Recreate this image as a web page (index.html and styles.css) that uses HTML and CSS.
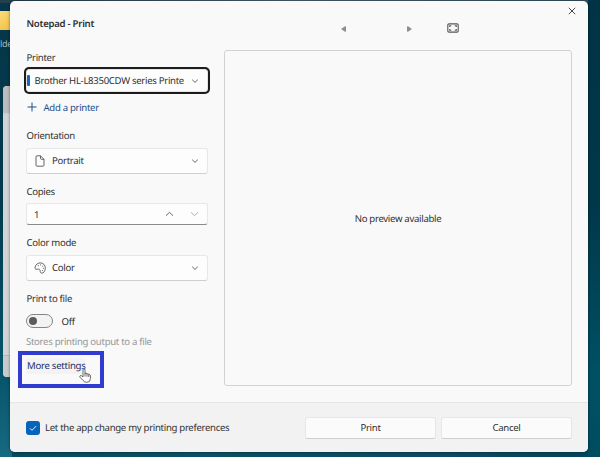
FILE: index.html
```html
<!DOCTYPE html>
<html lang="en">
<head>
<meta charset="utf-8">
<title>Notepad - Print</title>
<link rel="stylesheet" href="styles.css">
</head>
<body>
<div class="desktop">
  <div class="folder"></div>
  <span class="folder-name">lde</span>
  <div class="back-window"><div class="back-toolbar"></div><div class="back-page"></div><div class="back-status"></div></div>
</div>
<main class="dialog">
  <div class="content">
    <section class="sidebar">
      <h1>Notepad - Print</h1>
      <label class="label l-printer">Printer</label>
      <div class="select focused"><i class="accent"></i><span>Brother HL-L8350CDW series Printe</span>
        <svg class="chev" viewBox="0 0 8 8"><path d="M1.200 2.700 4 5.400 6.800 2.700"/></svg></div>
      <div class="add"><svg viewBox="0 0 10 10"><path d="M5 .5v9M.5 5h9"/></svg><span>Add a printer</span></div>
      <label class="label l-orient">Orientation</label>
      <div class="select"><svg class="icon" viewBox="0 0 12 12"><path d="M3 .8h3.500L10 4.300v5.900a1 1 0 0 1-1 1H3a1 1 0 0 1-1-1V1.800a1 1 0 0 1 1-1ZM6.500.8v2.500a1 1 0 0 0 1 1H10"/></svg><span>Portrait</span>
        <svg class="chev" viewBox="0 0 8 8"><path d="M1.200 2.700 4 5.400 6.800 2.700"/></svg></div>
      <label class="label l-copies">Copies</label>
      <div class="number"><span>1</span>
        <svg class="spin" viewBox="0 0 9 8"><path d="M1 5.700 4.500 2.300 8 5.700"/></svg>
        <svg class="spin off" viewBox="0 0 9 8"><path d="M1 2.300 4.500 5.700 8 2.300"/></svg></div>
      <label class="label l-color">Color mode</label>
      <div class="select"><svg class="icon" viewBox="0 0 12 12"><path d="M1 5.500C1.500 2.400 4 .7 6.800.9c3 .3 4.700 2.700 4.500 5.400-.2 2.700-1.700 5-3.500 4.900-1.600-.1-1.500-1.500-1.700-2.600C5.900 7.300 5 6.800 3.900 7.100 2.600 7.500.700 7.400 1 5.500Z"/><path class="dots" d="M4.200 3.700h.1M6.600 2.900h.1M8.700 4.100h.1M9.300 6.300h.1M8.300 8.500h.1"/></svg><span>Color</span>
        <svg class="chev" viewBox="0 0 8 8"><path d="M1.200 2.700 4 5.400 6.800 2.700"/></svg></div>
      <label class="label l-file">Print to file</label>
      <div class="toggle-row"><div class="toggle"></div><span>Off</span></div>
      <div class="hint">Stores printing output to a file</div>
      <div class="highlight"><a class="more">More settings</a>
        <svg class="hand" viewBox="0 0 12 15"><path d="M4 9V2q0-1.200 1-1.200T6 2v4q.2-1 1.100-.9 1 .1.900 1.200.3-.8 1.100-.6.8.2.700 1.200.4-.6 1-.3.600.3.600 1.300v2.600q0 3.800-3.600 3.800-2.500 0-3.800-2L1 9.200q-.6-1 .2-1.500T2.800 8Z"/><path d="M6 6v2.500M8 6.300v2.400M9.800 7v2"/></svg></div>
    </section>
    <section class="preview">
      <div class="pager">
        <svg class="prev" viewBox="0 0 5 6"><path d="M0 3 4 .3Q5 0 5 1v4q0 1-1 .700Z"/></svg>
        <svg class="next" viewBox="0 0 5 6"><path d="M5 3 1 .3Q0 0 0 1v4q0 1 1 .700Z"/></svg>
        <svg class="fit" viewBox="0 0 12 10"><rect x=".8" y=".9" width="10.400" height="8.200" rx="1.200"/><path d="M2.700 4V2.700h1.600M7.700 2.700h1.600V4M9.300 6v1.300H7.700M4.300 7.300H2.700V6"/></svg>
        <svg class="close" viewBox="0 0 8 8"><path d="m.8.8 6.400 6.400M7.200.8.8 7.200"/></svg>
      </div>
      <div class="page"><span>No preview available</span></div>
    </section>
  </div>
  <footer>
    <div class="check"><svg viewBox="0 0 8 8"><path d="m1 4.300 2 2L7.200 2"/></svg></div>
    <span>Let the app change my printing preferences</span>
    <button class="print">Print</button><button class="cancel">Cancel</button>
  </footer>
</main>
</body>
</html>
```

FILE: styles.css
```css
* { box-sizing: border-box; }
body { margin: 0; width: 600px; height: 457px; overflow: hidden; position: relative; padding: 1px 0 0 10px;
  font: 9.600px "Noto Sans", "Open Sans", sans-serif; letter-spacing: -.31px; text-rendering: geometricPrecision; color: #303030;
  background: linear-gradient(90deg, #064a5d, #0b5064 35%, #0b4a60 75%, #034559); }
svg { fill: none; stroke: #555; flex: none; display: block; overflow: visible; }
span, a { white-space: nowrap; }
.desktop { position: absolute; inset: 0; background:
  linear-gradient(90deg, #24404f, #4a6673 50%, #365362) 0 0 / 588px 3px no-repeat,
  linear-gradient(#003345, #00384a 45%, #005064 82%, #004c60) 588px 0 / 12px 457px no-repeat,
  linear-gradient(#073648, #003b4e 45%, #07546a 82%, #176a80) 0 0 / 12px 457px no-repeat; }
.folder { position: absolute; left: 0; top: 11px; width: 12px; height: 19px; background: linear-gradient(135deg, #ffdc77, #eebd45); }
.folder-name { position: absolute; left: 0; top: 37px; font-size: 9px; line-height: 13px; color: #a9bac2; }
.back-window { position: absolute; left: 3px; top: 86px; width: 20px; height: 291px; border-radius: 4px; overflow: hidden; background: #d2d3d4; display: flex; flex-direction: column; }
.back-toolbar { height: 27px; background: #bcbdbe; }
.back-page { flex: 1; border-top: 1px solid #ccc; }
.back-status { height: 22px; border-top: 1px solid #b6b7b7; background: #c9caca; }
.dialog { position: relative; width: 578px; height: 451px; border-radius: 5px; overflow: hidden; background: #f9f9f9;
  display: flex; flex-direction: column; box-shadow: 0 0 3px rgba(0,0,0,.5); }
.content { height: 401px; display: flex; padding: 0 16px; }
.sidebar { width: 182px; flex: none; }
h1 { margin: 0; padding-left: .5px; font-size: 9.600px; font-weight: 600; line-height: 45px; letter-spacing: -.26px; }
.label { display: block; padding-left: .5px; }
.l-printer { line-height: 23px; }
.l-orient { line-height: 24px; }
.l-copies { padding-top: 7px; line-height: 22px; }
.l-color { padding-top: 6px; line-height: 24px; }
.l-file { padding-top: 3px; line-height: 30px; }
.select { height: 26px; display: flex; align-items: center; padding: 0 8px 1px 7px; background: #fdfdfd; border: 1px solid #e7e7e7; border-bottom-color: #cfcfcf; border-radius: 3px; }
.select.focused { height: 23px; padding: 0 8px 0 0; border-color: #e4e4e4; box-shadow: 0 0 0 2px #1c1c1c; }
.accent { flex: none; width: 2.500px; height: 11px; background: #1767c0; border-radius: 1px; margin-right: 5px; }
.chev { width: 8px; height: 8px; margin-left: auto; stroke-width: .9; }
.icon { width: 12px; height: 12px; margin-right: 6px; stroke-width: .9; }
.dots { stroke-linecap: round; stroke-width: 1; }
.add { height: 32px; display: flex; align-items: center; color: #1b4e8c; padding: 0 0 2px 1px; }
.add svg { width: 10px; height: 10px; stroke: #1b4e8c; stroke-width: 1; margin-right: 6.500px; }
.number { height: 22px; display: flex; align-items: center; padding: 0 8px 0 7px; background: #fdfdfd; border: 1px solid #e7e7e7; border-bottom-color: #8a8a8a; border-radius: 3px; }
.spin { width: 9px; height: 8px; stroke-width: .9; margin-left: auto; }
.spin.off { stroke: #a5a5a5; margin-left: 16px; }
.toggle-row { height: 14px; display: flex; align-items: center; gap: 8.500px; }
.toggle { width: 27px; height: 14px; border: 1px solid #858585; border-radius: 7px; background: #f3f3f3; display: flex; align-items: center; padding-left: 2px; }
.toggle::before { content: ""; width: 8px; height: 8px; border-radius: 50%; background: #5b5b5b; }
.hint { padding-top: 4px; line-height: 19px; color: #969696; }
.highlight { position: relative; width: 86px; height: 37px; margin-left: -8px; border: 4px solid #303bd0; padding: 3px 0 0 4px; }
.more { display: block; width: 59px; height: 16px; line-height: 16px; border-radius: 2px; background: #f3f3f3; color: #1b2c68; padding-left: 1px; letter-spacing: -.27px; }
.hand { position: absolute; left: 57px; top: 13px; width: 12px; height: 15px; stroke: #444; stroke-width: .8; }
.hand path:first-child { fill: #fff; }
.preview { width: 348px; margin-left: 16px; }
.pager { height: 49px; display: flex; }
.pager svg { margin-top: 25px; }
.prev, .next { width: 5px; height: 6px; fill: #8e8e8e; stroke: none; }
.prev { margin-left: 117px; }
.next { margin-left: 60.500px; }
.pager .fit { width: 12px; height: 10px; stroke-width: 1.100; margin: 22px 0 0 35.500px; }
.pager .close { width: 8px; height: 8px; stroke: #333; stroke-width: .9; margin: 6px 0 0 108.500px; }
.page { height: 336px; width: 348px; border: 1px solid #d2d2d2; border-radius: 3px; display: flex; align-items: center; justify-content: center; }
footer { height: 50px; border-top: 1px solid #e5e5e5; background: #f2f2f2; display: flex; align-items: center; padding: 0 16px; }
.check { width: 14px; height: 14px; border-radius: 3px; background: #0764bb; display: flex; align-items: center; justify-content: center; margin-right: 5px; }
.check svg { width: 8px; height: 8px; stroke: #fff; stroke-width: .9; }
button { height: 22px; width: 131px; padding: 0; font: inherit; letter-spacing: inherit; color: inherit; background: #fbfbfb; border: 1px solid #e6e6e6; border-bottom-color: #cfcfcf; border-radius: 3px; }
.print { margin-left: auto; margin-right: 5px; }
```
